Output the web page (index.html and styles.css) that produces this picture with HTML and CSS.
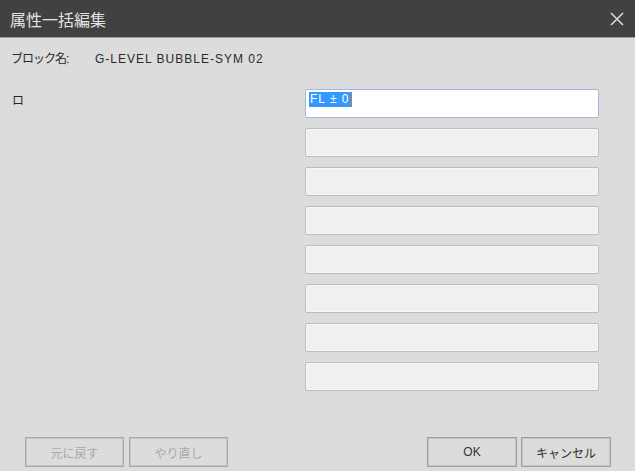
FILE: index.html
```html
<!DOCTYPE html>
<html lang="ja">
  <head>
    <meta charset="UTF-8" />
    <meta name="viewport" content="width=device-width, initial-scale=1.0" />
    <title>属性一括編集</title>
    <link rel="stylesheet" href="styles.css">
  </head>
  <body>
    <div class="dialog">
      <div class="titlebar">
        <span class="title">属性一括編集</span>
        <span class="close">
          <svg width="14" height="14" viewBox="0 0 14 14">
            <path d="M1 1 L13 13 M13 1 L1 13" stroke="#d8d8d8" stroke-width="1.6" fill="none" />
          </svg>
        </span>
      </div>

      <div class="block-row">
        <span class="block-label">ブロック名:</span>
        <span class="block-name">G-LEVEL BUBBLE-SYM 02</span>
      </div>

      <div class="fields">
        <div class="field-label">ロ</div>
        <div class="inputs">
          <div class="input active"><span class="sel">FL ± 0</span><span class="caret"></span></div>
          <div class="input"></div>
          <div class="input"></div>
          <div class="input"></div>
          <div class="input"></div>
          <div class="input"></div>
          <div class="input"></div>
          <div class="input"></div>
        </div>
      </div>

      <div class="footer">
        <div class="btn-group">
          <div class="btn wide disabled">元に戻す</div>
          <div class="btn wide disabled">やり直し</div>
        </div>
        <div class="btn-group right">
          <div class="btn">OK</div>
          <div class="btn">キャンセル</div>
        </div>
      </div>
    </div>
  </body>
</html>
```

FILE: styles.css
```css
  body {
    margin: 0;
    background: #dcdcdc;
    font-family: "Liberation Sans", "Noto Sans CJK JP", sans-serif;
    font-size: 12px;
    color: #2a2a2a;
  }

  .dialog {
    display: flex;
    flex-direction: column;
    width: 635px;
    height: 471px;
    overflow: hidden;
  }

  .titlebar {
    display: flex;
    align-items: center;
    justify-content: space-between;
    height: 37px;
    padding: 0 11px 0 10px;
    background: #414141;
    border-bottom: 1px solid #9c9c9c;
  }

  .title {
    color: #e4e4e4;
    font-size: 16px;
  }

  .close {
    display: flex;
  }

  .block-row {
    display: flex;
    height: 14px;
    line-height: 14px;
    margin-top: 14px;
    padding-left: 11px;
  }

  .block-label {
    width: 84px;
    letter-spacing: -1px;
  }

  .block-name {
    letter-spacing: 1px;
  }

  .fields {
    display: flex;
    justify-content: space-between;
    margin-top: 23px;
    padding: 0 36px 0 12px;
  }

  .field-label {
    margin-top: 5px;
    line-height: 14px;
  }

  .inputs {
    display: flex;
    flex-direction: column;
    gap: 10px;
  }

  .input {
    display: flex;
    align-items: center;
    box-sizing: border-box;
    width: 294px;
    height: 29px;
    padding: 0 0 0 3px;
    border: 1px solid #bdbdbd;
    border-radius: 2px;
    background: #f0f0f0;
    box-shadow: inset 0 0 0 1px #f7f7f7;
  }

  .input.active {
    align-items: flex-start;
    padding-top: 2px;
    border-color: #9dbadb;
    background: #ffffff;
    box-shadow: none;
  }

  .sel {
    background: #3399ff;
    color: #ffffff;
    line-height: 15px;
    padding: 0 1px;
    letter-spacing: 1px;
  }

  .caret {
    width: 1px;
    height: 15px;
    background: #d2782c;
  }

  .footer {
    display: flex;
    justify-content: space-between;
    margin-top: auto;
    padding: 0 24px 4px 25px;
  }

  .btn-group {
    display: flex;
    gap: 5px;
  }

  .btn-group.right {
    gap: 4px;
  }

  .btn {
    display: flex;
    align-items: center;
    justify-content: center;
    box-sizing: border-box;
    width: 90px;
    height: 30px;
    border: 1px solid #9e9e9e;
    box-shadow: inset 0 0 0 1px #c4c4c4;
    color: #333333;
  }

  .btn.wide {
    width: 99px;
  }

  .btn.disabled {
    color: #a8a8a8;
    border-color: #a8a8a8;
  }
```
